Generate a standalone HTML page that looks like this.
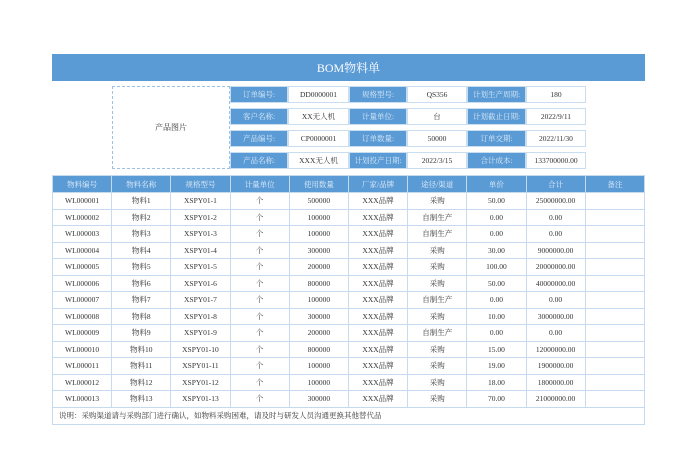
<!DOCTYPE html>
<html><head><meta charset="utf-8"><style>
*{margin:0;padding:0;box-sizing:border-box}
body{width:680px;height:461px;background:#fff;position:relative;overflow:hidden;font-family:"Liberation Serif","Noto Serif CJK SC",serif;font-size:7.5px;color:#333}
.a{position:absolute;display:flex;align-items:center;justify-content:center;white-space:nowrap}
.t{background:#5b9bd5;color:#fff}
.title{left:52px;top:54px;width:593px;height:27px;font-size:12px}
.img{left:112px;top:86px;width:118px;height:83px;border:1px dashed #9cc3e6;font-size:8px}
.l{background:#5b9bd5;color:#dbe9f7;border:1px solid #c9ddf0}
.v{background:#fff;border:1px solid #c9ddf0}
table{position:absolute;left:52px;top:175px;width:593px;border-collapse:collapse;table-layout:fixed}
td,th{border:1px solid #c5d9ef;height:16.5px;text-align:center;font-weight:normal;padding:0;white-space:nowrap}
th{background:#5b9bd5;color:#e3eefa;height:17px}
td.n{text-align:left;padding-left:6px}
</style></head><body>
<div class="a t title">BOM物料单</div>
<div class="a img">产品图片</div>

<div class="a l" style="left:230px;top:86px;width:58px;height:17px">订单编号:</div>
<div class="a v" style="left:288px;top:86px;width:61px;height:17px">DD0000001</div>
<div class="a l" style="left:349px;top:86px;width:58px;height:17px">规格型号:</div>
<div class="a v" style="left:407px;top:86px;width:60px;height:17px">QS356</div>
<div class="a l" style="left:467px;top:86px;width:59px;height:17px">计划生产周期:</div>
<div class="a v" style="left:526px;top:86px;width:60px;height:17px">180</div>

<div class="a l" style="left:230px;top:108px;width:58px;height:17px">客户名称:</div>
<div class="a v" style="left:288px;top:108px;width:61px;height:17px">XX无人机</div>
<div class="a l" style="left:349px;top:108px;width:58px;height:17px">计量单位:</div>
<div class="a v" style="left:407px;top:108px;width:60px;height:17px">台</div>
<div class="a l" style="left:467px;top:108px;width:59px;height:17px">计划截止日期:</div>
<div class="a v" style="left:526px;top:108px;width:60px;height:17px">2022/9/11</div>

<div class="a l" style="left:230px;top:130px;width:58px;height:17px">产品编号:</div>
<div class="a v" style="left:288px;top:130px;width:61px;height:17px">CP0000001</div>
<div class="a l" style="left:349px;top:130px;width:58px;height:17px">订单数量:</div>
<div class="a v" style="left:407px;top:130px;width:60px;height:17px">50000</div>
<div class="a l" style="left:467px;top:130px;width:59px;height:17px">订单交期:</div>
<div class="a v" style="left:526px;top:130px;width:60px;height:17px">2022/11/30</div>

<div class="a l" style="left:230px;top:152px;width:58px;height:17px">产品名称:</div>
<div class="a v" style="left:288px;top:152px;width:61px;height:17px">XXX无人机</div>
<div class="a l" style="left:349px;top:152px;width:58px;height:17px">计划投产日期:</div>
<div class="a v" style="left:407px;top:152px;width:60px;height:17px">2022/3/15</div>
<div class="a l" style="left:467px;top:152px;width:59px;height:17px">合计成本:</div>
<div class="a v" style="left:526px;top:152px;width:60px;height:17px">133700000.00</div>

<table>
<tr><th>物料编号</th><th>物料名称</th><th>规格型号</th><th>计量单位</th><th>使用数量</th><th>厂家/品牌</th><th>途径/渠道</th><th>单价</th><th>合计</th><th>备注</th></tr>
<tr><td>WL000001</td><td>物料1</td><td>XSPY01-1</td><td>个</td><td>500000</td><td>XXX品牌</td><td>采购</td><td>50.00</td><td>25000000.00</td><td></td></tr>
<tr><td>WL000002</td><td>物料2</td><td>XSPY01-2</td><td>个</td><td>100000</td><td>XXX品牌</td><td>自制生产</td><td>0.00</td><td>0.00</td><td></td></tr>
<tr><td>WL000003</td><td>物料3</td><td>XSPY01-3</td><td>个</td><td>100000</td><td>XXX品牌</td><td>自制生产</td><td>0.00</td><td>0.00</td><td></td></tr>
<tr><td>WL000004</td><td>物料4</td><td>XSPY01-4</td><td>个</td><td>300000</td><td>XXX品牌</td><td>采购</td><td>30.00</td><td>9000000.00</td><td></td></tr>
<tr><td>WL000005</td><td>物料5</td><td>XSPY01-5</td><td>个</td><td>200000</td><td>XXX品牌</td><td>采购</td><td>100.00</td><td>20000000.00</td><td></td></tr>
<tr><td>WL000006</td><td>物料6</td><td>XSPY01-6</td><td>个</td><td>800000</td><td>XXX品牌</td><td>采购</td><td>50.00</td><td>40000000.00</td><td></td></tr>
<tr><td>WL000007</td><td>物料7</td><td>XSPY01-7</td><td>个</td><td>100000</td><td>XXX品牌</td><td>自制生产</td><td>0.00</td><td>0.00</td><td></td></tr>
<tr><td>WL000008</td><td>物料8</td><td>XSPY01-8</td><td>个</td><td>300000</td><td>XXX品牌</td><td>采购</td><td>10.00</td><td>3000000.00</td><td></td></tr>
<tr><td>WL000009</td><td>物料9</td><td>XSPY01-9</td><td>个</td><td>200000</td><td>XXX品牌</td><td>自制生产</td><td>0.00</td><td>0.00</td><td></td></tr>
<tr><td>WL000010</td><td>物料10</td><td>XSPY01-10</td><td>个</td><td>800000</td><td>XXX品牌</td><td>采购</td><td>15.00</td><td>12000000.00</td><td></td></tr>
<tr><td>WL000011</td><td>物料11</td><td>XSPY01-11</td><td>个</td><td>100000</td><td>XXX品牌</td><td>采购</td><td>19.00</td><td>1900000.00</td><td></td></tr>
<tr><td>WL000012</td><td>物料12</td><td>XSPY01-12</td><td>个</td><td>100000</td><td>XXX品牌</td><td>采购</td><td>18.00</td><td>1800000.00</td><td></td></tr>
<tr><td>WL000013</td><td>物料13</td><td>XSPY01-13</td><td>个</td><td>300000</td><td>XXX品牌</td><td>采购</td><td>70.00</td><td>21000000.00</td><td></td></tr>
<tr><td colspan="10" class="n" style="height:17px">说明：采购渠道请与采购部门进行确认，如物料采购困难，请及时与研发人员沟通更换其他替代品</td></tr>
</table>
</body></html>
